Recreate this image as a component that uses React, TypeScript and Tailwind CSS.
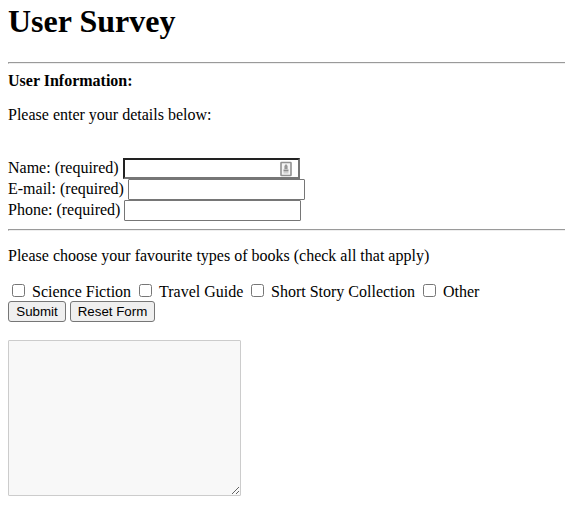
import React from "react";

const fields = [
  { label: "Name: (required)", focused: true },
  { label: "E-mail: (required)", focused: false },
  { label: "Phone: (required)", focused: false },
];

const books = [
  { label: "Science Fiction", width: "w-[127px]" },
  { label: "Travel Guide", width: "w-[112px]" },
  { label: "Short Story Collection", width: "w-[172px]" },
  { label: "Other", width: "w-[80px]" },
];

function Rule() {
  return <div className="h-[2px] border-t border-l border-t-[#9a9a9a] border-l-[#9a9a9a] border-b border-b-[#eeeeee]" />;
}

function ContactIcon() {
  return (
    <svg width="12" height="16" viewBox="0 0 12 16" className="mr-[6px] shrink-0" aria-hidden="true">
      <rect x="1" y="1.5" width="10" height="13" rx="0.5" fill="#f4f4f4" stroke="#929292" strokeWidth="1.6" />
      <path d="M6 3 7.6 5v3H4.4V5Z" fill="#969696" />
      <path d="M3.5 9.5h5" stroke="#8e8e8e" strokeWidth="2" />
      <path d="M3.5 11.8h5" stroke="#cccccc" strokeWidth="1.4" />
    </svg>
  );
}

export default function App() {
  return (
    <main className="h-[516px] overflow-hidden bg-white pl-[8px] font-['Liberation_Serif','Times_New_Roman',serif] text-[16px] leading-[18px] text-black">
      <h1 className="pt-[3px] text-[32px] leading-[37px] font-bold">User Survey</h1>
      <div className="mt-[22px]">
        <Rule />
      </div>
      <h2 className="mt-[8px] text-[16px] font-bold">User Information:</h2>
      <p className="mt-[16px]">Please enter your details below:</p>

      <form onSubmit={(e) => e.preventDefault()}>
        <div className="mt-[34px]">
          {fields.map((f) => (
            <label key={f.label} className="flex h-[21px] items-start whitespace-nowrap">
              <span className="mt-[1px]">{f.label}</span>
              <span
                className={
                  f.focused
                    ? "ml-[4px] flex h-[21px] w-[177px] items-center border-2 border-t-[#222222] border-r-[#767676] border-b-[#767676] border-l-[#222222] bg-white"
                    : "ml-[4px] flex h-[21px] w-[177px] items-center rounded-[1px] border border-[#767676] bg-white"
                }
              >
                <input type="text" className="h-full min-w-0 flex-1 px-[2px] text-[13.333px] outline-none" />
                {f.focused && <ContactIcon />}
              </span>
            </label>
          ))}
        </div>
        <div className="mt-[8px]">
          <Rule />
        </div>
        <p className="mt-[16px]">Please choose your favourite types of books (check all that apply)</p>

        <div className="mt-[18px] flex h-[18px]">
          {books.map((b) => (
            <label key={b.label} className={`flex shrink-0 whitespace-nowrap ${b.width}`}>
              <input type="checkbox" className="mt-[1px] mr-[3px] ml-[4px] h-[13px] w-[13px] shrink-0" />
              <span className="ml-[4px]">{b.label}</span>
            </label>
          ))}
        </div>
        <div className="flex gap-[4px] font-['Liberation_Sans',Arial,sans-serif] text-[13.333px] leading-[15px]">
          <button type="submit" className="h-[21px] w-[58px] rounded-[3px] border border-[#767676] bg-[#efefef]">
            Submit
          </button>
          <button type="reset" className="h-[21px] w-[85px] whitespace-nowrap rounded-[3px] border border-[#767676] bg-[#efefef]">
            Reset Form
          </button>
        </div>
        <textarea className="mt-[18px] block h-[156px] w-[233px] resize rounded-[1px] border border-[#cccccc] bg-[#f8f8f8] p-[2px] outline-none" />
      </form>
    </main>
  );
}
